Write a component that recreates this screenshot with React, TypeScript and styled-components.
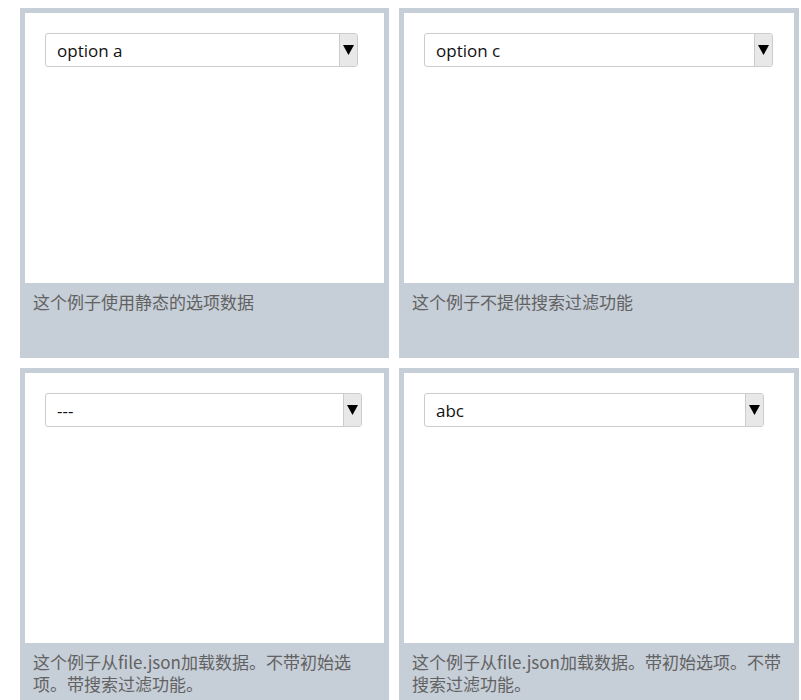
import React from "react";
import styled, { createGlobalStyle } from "styled-components";

const GlobalStyle = createGlobalStyle`
  html, body {
    margin: 0;
    padding: 0;
    background: #ffffff;
  }
  body {
    font-family: "Open Sans", "Noto Sans CJK SC", sans-serif;
  }
`;

const Page = styled.div`
  display: grid;
  grid-template-columns: 369px 400px;
  column-gap: 10px;
  row-gap: 10px;
  padding: 8px 0 0 20px;
`;

const Card = styled.div`
  display: flex;
  flex-direction: column;
  border: 5px solid #c6ced8;
  border-bottom: none;
  background: #c6ced8;
`;

const Body = styled.div`
  height: 270px;
  background: #ffffff;
  padding: 20px;
  box-sizing: border-box;
`;

const Caption = styled.div`
  height: 75px;
  box-sizing: border-box;
  padding: 8px 8px 0 8px;
  font-family: "Noto Sans CJK SC", sans-serif;
  font-size: 17px;
  line-height: 22px;
  color: #626262;
`;

const Select = styled.div<{ $w: number }>`
  width: ${(p) => p.$w}px;
  height: 34px;
  box-sizing: border-box;
  display: flex;
  align-items: stretch;
  border: 1px solid #cccccc;
  border-radius: 3px;
  background: #ffffff;
  overflow: hidden;
`;

const Value = styled.div`
  flex: 1;
  display: flex;
  align-items: center;
  padding-left: 11px;
  font-family: "Open Sans", sans-serif;
  font-size: 17px;
  color: #111111;
`;

const ArrowBox = styled.div`
  width: 17px;
  display: flex;
  align-items: center;
  justify-content: center;
  background: #e8e8e8;
  border-left: 1px solid #cccccc;
`;

const Arrow = () => (
  <svg width="11" height="10" viewBox="0 0 11 10">
    <polygon points="0,0 11,0 5.5,10" fill="#000" />
  </svg>
);

const Dropdown = ({ value, w }: { value: string; w: number }) => (
  <Select $w={w}>
    <Value>{value}</Value>
    <ArrowBox>
      <Arrow />
    </ArrowBox>
  </Select>
);

const items = [
  { value: "option a", w: 313, text: "这个例子使用静态的选项数据" },
  { value: "option c", w: 349, text: "这个例子不提供搜索过滤功能" },
  { value: "---", w: 317, text: "这个例子从file.json加载数据。不带初始选项。带搜索过滤功能。" },
  { value: "abc", w: 340, text: "这个例子从file.json加载数据。带初始选项。不带搜索过滤功能。" },
];

export default function App() {
  return (
    <>
      <GlobalStyle />
      <Page>
        {items.map((it, i) => (
          <Card key={i}>
            <Body>
              <Dropdown value={it.value} w={it.w} />
            </Body>
            <Caption>{it.text}</Caption>
          </Card>
        ))}
      </Page>
    </>
  );
}
